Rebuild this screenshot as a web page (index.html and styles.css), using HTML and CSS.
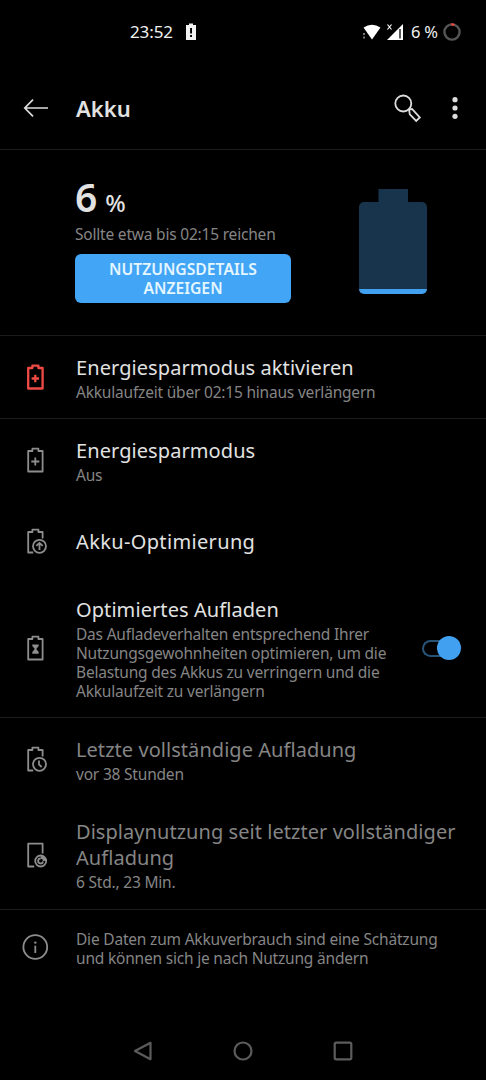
FILE: index.html
```html
<!DOCTYPE html>
<html lang="de">
<head>
    <meta charset="UTF-8">
    <meta name="viewport" content="width=device-width, initial-scale=1.0">
    <title>Akku</title>
    <link rel="stylesheet" href="styles.css">
</head>
<body>
    <div class="status-bar">
        <div class="status-left">
            <span class="clock">23:52</span>
            <svg width="12" height="18" viewBox="0 0 12 18">
                <path fill="#f2f2f2" d="M4 0.500h4v1.500h3v15H1V2h3z"/>
                <path fill="#000" d="M5.100 5h1.900v5.500H5.100zM5.100 12h1.900v1.900H5.100z"/>
            </svg>
        </div>
        <div class="status-right">
            <svg class="wifi" width="20" height="18" viewBox="0 0 20 18">
                <path fill="#fff" d="M1.500 4.500Q10 -1 18.500 4.500L10 16.500z"/>
                <path fill="#777" d="M1 10h2v2H1zM1 13.500h2v2H1z"/>
            </svg>
            <svg class="signal" width="18" height="18" viewBox="0 0 18 18">
                <path fill="#fff" d="M17 1v16H1z"/>
                <path stroke="#000" stroke-width="1.300" d="M14 6v9.500"/>
                <path stroke="#fff" stroke-width="1.200" d="M1.500 1.500l4 5M5.500 1.500l-4 5"/>
            </svg>
            <span class="percent">6&nbsp;%</span>
            <svg class="ring" width="20" height="20" viewBox="0 0 20 20" fill="none" stroke-width="2.400">
                <circle cx="10" cy="10" r="7.600" stroke="#555"/>
                <path stroke="#e0483e" d="M9 2.450a7.600 7.600 0 0 1 3.500.4"/>
            </svg>
        </div>
    </div>

    <header class="app-bar">
        <svg class="back" width="28" height="24" viewBox="0 0 28 24" fill="none" stroke="#ddd" stroke-width="1.700">
            <path d="M27 12H4M12 3.700L3.800 12l8.200 8.300"/>
        </svg>
        <h1>Akku</h1>
        <svg class="search" width="30" height="30" viewBox="0 0 30 30" fill="none" stroke="#ddd" stroke-width="1.800">
            <circle cx="11.300" cy="10.500" r="8"/>
            <path d="M17 16.300l3-.3 7.800 8.500-3.600 3.400-6.400-6.600z"/>
        </svg>
        <svg class="more" width="8" height="24" viewBox="0 0 8 24" fill="#ddd">
            <circle cx="4" cy="3.700" r="2.600"/>
            <circle cx="4" cy="12" r="2.600"/>
            <circle cx="4" cy="20.300" r="2.600"/>
        </svg>
    </header>

    <section class="summary">
        <div class="summary-text">
            <div class="level"><span>6</span><small>%</small></div>
            <p class="sub estimate">Sollte etwa bis 02:15 reichen</p>
            <button>NUTZUNGSDETAILS<br>ANZEIGEN</button>
        </div>
        <svg class="battery" width="70" height="106" viewBox="0 0 70 106">
            <path fill="#17344c" d="M20.500 0h29.500v13h14a5 5 0 0 1 5 5v82H1V18a5 5 0 0 1 5-5h14.500z"/>
            <path fill="#42a0f0" d="M1 100h68a5 5 0 0 1-5 5H6a5 5 0 0 1-5-5z"/>
        </svg>
    </section>

    <section class="group">
        <div class="row">
            <svg class="icon warn" viewBox="0 0 28 28">
                <path d="M7.200 5h4.200V2.700h6V5h4.200v20.500H7.200z"/>
                <path d="M14.300 11.800v7.400M10.600 15.500h7.400"/>
            </svg>
            <div class="text">
                <div class="title">Energiesparmodus aktivieren</div>
                <div class="sub">Akkulaufzeit über 02:15 hinaus verlängern</div>
            </div>
        </div>
    </section>

    <section class="group">
        <div class="row">
            <svg class="icon" viewBox="0 0 28 28">
                <path d="M7.200 5h4.200V2.700h6V5h4.200v20.500H7.200z"/>
                <path d="M14.300 11.500v8M10.300 15.500h8"/>
            </svg>
            <div class="text">
                <div class="title">Energiesparmodus</div>
                <div class="sub">Aus</div>
            </div>
        </div>
        <div class="row single">
            <svg class="icon" viewBox="0 0 28 28">
                <path d="M21.600 11.500V5h-4.200V2.700h-6V5H7.200v20.500h5"/>
                <circle cx="18.500" cy="19.300" r="6.500"/>
                <path d="M18.500 23v-7M15.300 18.800l3.200-3 3.200 3"/>
            </svg>
            <div class="text">
                <div class="title">Akku-Optimierung</div>
            </div>
        </div>
        <div class="row charging">
            <svg class="icon" viewBox="0 0 28 28">
                <path d="M7.200 5h4.200V2.700h6V5h4.200v20.500H7.200z"/>
                <path class="solid" d="M11.300 10.500h6.400v1.600L15.200 15l2.500 3v1.800h-6.400V18l2.500-3-2.500-2.900z"/>
            </svg>
            <div class="text">
                <div class="title">Optimiertes Aufladen</div>
                <div class="sub">Das Aufladeverhalten entsprechend Ihrer<br>Nutzungsgewohnheiten optimieren, um die<br>Belastung des Akkus zu verringern und die<br>Akkulaufzeit zu verlängern</div>
            </div>
            <div class="switch"></div>
        </div>
    </section>

    <section class="group muted">
        <div class="row last-charge">
            <svg class="icon" viewBox="0 0 28 28">
                <path d="M21.600 11.500V5h-4.200V2.700h-6V5H7.200v20.500h5"/>
                <circle cx="18.500" cy="19.300" r="6.500"/>
                <path d="M18 15.500v4l2.700 2.500"/>
            </svg>
            <div class="text">
                <div class="title">Letzte vollständige Aufladung</div>
                <div class="sub">vor 38 Stunden</div>
            </div>
        </div>
        <div class="row screen">
            <svg class="icon" viewBox="0 0 28 28">
                <path d="M21.600 12.500V2.700H7.200v22.800h6"/>
                <circle cx="19.700" cy="20" r="5.500"/>
                <path class="solid" d="M19.700 14.500a5.500 5.500 0 0 1 5.500 5.500h-3.300a2.200 2.200 0 0 0-2.200-2.200z"/>
                <path d="M19.700 17.500a2.500 2.500 0 1 0 2.400 3"/>
            </svg>
            <div class="text">
                <div class="title">Displaynutzung seit letzter vollständiger<br>Aufladung</div>
                <div class="sub">6 Std., 23 Min.</div>
            </div>
        </div>
    </section>

    <footer class="row info">
        <svg class="icon" viewBox="0 0 28 28">
            <circle cx="14.300" cy="14" r="11.900"/>
            <path d="M14.300 12.700v7.300"/>
            <circle class="solid" cx="14.300" cy="9.600" r="1.200"/>
        </svg>
        <div class="text">
            <div class="sub">Die Daten zum Akkuverbrauch sind eine Schätzung<br>und können sich je nach Nutzung ändern</div>
        </div>
    </footer>

    <nav class="nav-bar">
        <svg viewBox="0 0 20 20"><path d="M17.500 1.800v16.400L2 10z"/></svg>
        <svg viewBox="0 0 20 20"><circle cx="10" cy="10" r="8.500"/></svg>
        <svg viewBox="0 0 20 20"><rect x="1.700" y="1.700" width="16.600" height="16.600" rx="1.500"/></svg>
    </nav>
</body>
</html>
```
FILE: styles.css
```css
* {
    box-sizing: border-box;
}
body {
    margin: 0;
    height: 1080px;
    display: flex;
    flex-direction: column;
    background: #000;
    color: #e2e2e2;
    font-family: "Noto Sans", sans-serif;
    overflow: hidden;
}
h1, p {
    margin: 0;
}
svg {
    flex: none;
    display: block;
}

/* status bar */
.status-bar {
    height: 67px;
    padding: 22px 24px 0 130px;
    display: flex;
    justify-content: space-between;
    color: #f0f0f0;
    font-size: 17px;
    line-height: 20px;
}
.status-left,
.status-right {
    display: flex;
    align-items: center;
    height: 20px;
}
.status-left {
    gap: 12px;
}
.clock {
    width: 43px;
    letter-spacing: -0.1px;
}
.signal {
    margin-left: 4px;
}
.percent {
    width: 28px;
    margin-left: 7px;
    font-size: 16.500px;
    white-space: nowrap;
    letter-spacing: -0.3px;
}
.ring {
    margin-left: 3px;
}

/* app bar */
.app-bar {
    height: 83px;
    border-bottom: 1px solid #1b1b1b;
    padding: 0 27px 0 21px;
    display: flex;
    align-items: center;
}
h1 {
    flex: 1;
    margin-left: 27px;
    font-size: 22px;
    font-weight: 600;
    line-height: 28px;
}
.more {
    margin-left: 29px;
}

/* battery summary */
.summary {
    height: 186px;
    border-bottom: 1px solid #1b1b1b;
    padding: 26px 58px 0 75px;
    display: flex;
    justify-content: space-between;
}
.level {
    height: 42px;
    display: flex;
    align-items: baseline;
    gap: 8px;
    font-size: 39px;
    line-height: 42px;
    font-weight: 600;
}
.level small {
    font-size: 24px;
    font-weight: 500;
}
.estimate {
    margin-top: 7px;
}
button {
    width: 216px;
    height: 49px;
    margin-top: 10px;
    padding: 1px 0 0;
    border: none;
    border-radius: 6px;
    background: #42a5f5;
    color: #e4f6ff;
    font: 600 15.700px/19px "Noto Sans", sans-serif;
    white-space: nowrap;
}
.battery {
    margin-top: 13px;
}

/* list */
.group {
    border-bottom: 1px solid #1b1b1b;
}
.row {
    height: 82px;
    display: flex;
    align-items: center;
    padding: 0 26px 0 21px;
}
.icon {
    width: 28px;
    height: 28px;
    margin-right: 27px;
    fill: none;
    stroke: #8d8d8d;
    stroke-width: 1.8;
    stroke-linejoin: round;
}
.icon .solid {
    fill: #8d8d8d;
    stroke: none;
}
.warn {
    stroke: #f04a45;
    stroke-width: 2.3;
}
.text {
    flex: 1;
    white-space: nowrap;
}
.title {
    font-size: 20px;
    line-height: 26px;
    letter-spacing: 0.08px;
}
.title + .sub {
    margin-top: 2px;
}
.sub {
    color: #858585;
    font-size: 15.500px;
    line-height: 19px;
    letter-spacing: -0.2px;
}
.muted .title,
.muted .sub {
    color: #858585;
}
.group .text {
    padding-top: 2px;
}
.single {
    height: 79px;
}
.single .title {
    letter-spacing: 0.35px;
}
.charging {
    height: 137px;
}
.charging .icon {
    margin-top: -2px;
}
.charging .text {
    padding-top: 1px;
}
.screen {
    height: 109px;
}
.muted .title {
    letter-spacing: 0.05px;
}
.info {
    height: 74px;
}
.info .text {
    padding-top: 3px;
}
.switch {
    position: relative;
    width: 38px;
    height: 17px;
    margin-top: -1px;
    border: 2px solid #285378;
    border-right: none;
    border-radius: 9px;
}
.switch::after {
    content: "";
    position: absolute;
    right: -1px;
    top: -6px;
    width: 24px;
    height: 24px;
    border-radius: 50%;
    background: #42a0f0;
}

/* navigation */
.nav-bar {
    margin-top: auto;
    height: 57px;
    padding: 18px 133px 0;
    display: flex;
    justify-content: space-between;
}
.nav-bar svg {
    width: 20px;
    height: 20px;
    fill: none;
    stroke: #5c5c5c;
    stroke-width: 2.2;
    stroke-linejoin: round;
}
```
